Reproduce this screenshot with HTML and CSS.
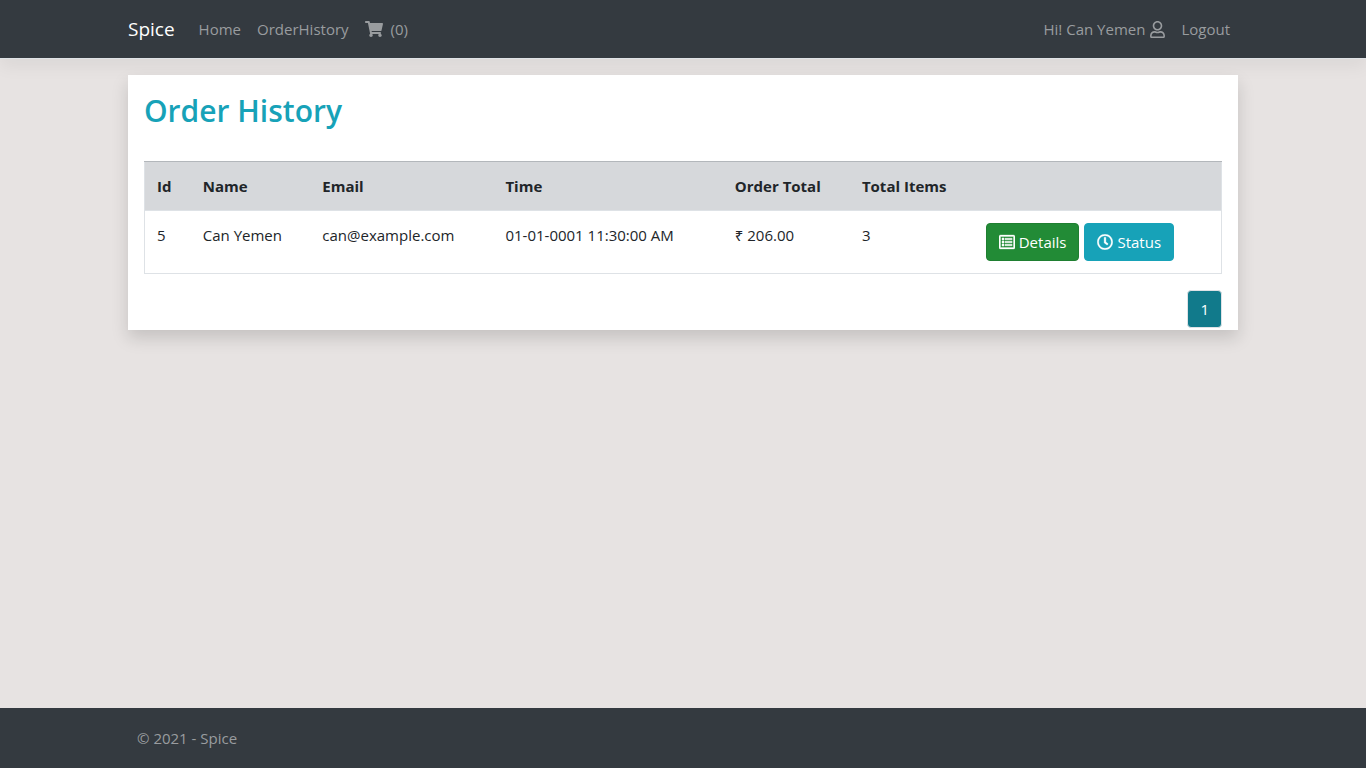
FILE: index.html
```html
<!DOCTYPE html>
<html lang="en">
<head>
<meta charset="utf-8">
<meta name="viewport" content="width=device-width, initial-scale=1">
<title>Order History - Spice</title>
<link rel="stylesheet" href="styles.css">
</head>
<body>
<header class="navbar">
  <nav class="container navbar-inner">
    <a class="brand" href="#">Spice</a>
    <a class="nav-link" href="#">Home</a>
    <a class="nav-link" href="#">OrderHistory</a>
    <a class="nav-link cart-link" href="#"><svg class="icon icon-cart" viewBox="0 0 576 512" aria-hidden="true"><path d="M528.12 301.319l47.273-208C578.806 78.301 567.391 64 551.99 64H159.208l-9.166-44.81C147.758 8.021 137.93 0 126.529 0H24C10.745 0 0 10.745 0 24v16c0 13.255 10.745 24 24 24h69.883l70.248 343.435C147.325 417.1 136 435.222 136 456c0 30.928 25.072 56 56 56s56-25.072 56-56c0-15.674-6.447-29.835-16.824-40h209.647C430.447 426.165 424 440.326 424 456c0 30.928 25.072 56 56 56s56-25.072 56-56c0-22.172-12.888-41.332-31.579-50.405l5.517-24.276c3.413-15.018-8.002-29.319-23.403-29.319H218.117l-6.545-32h293.145c11.206 0 20.92-7.754 23.403-18.681z"/></svg>(0)</a>
    <a class="nav-link user-link" href="#">Hi! Can Yemen<svg class="icon icon-user" viewBox="0 0 448 512" aria-hidden="true"><path d="M313.6 304c-28.7 0-42.5 16-89.6 16-47.1 0-60.8-16-89.6-16C60.2 304 0 364.2 0 438.4V464c0 26.5 21.5 48 48 48h352c26.5 0 48-21.5 48-48v-25.6c0-74.2-60.2-134.4-134.4-134.4zM400 464H48v-25.6c0-47.6 38.8-86.4 86.4-86.4 14.6 0 38.3 16 89.6 16 51.7 0 74.9-16 89.6-16 47.6 0 86.4 38.8 86.4 86.4V464zM224 288c79.5 0 144-64.5 144-144S303.5 0 224 0 80 64.5 80 144s64.5 144 144 144zm0-240c52.9 0 96 43.1 96 96s-43.1 96-96 96-96-43.1-96-96 43.1-96 96-96z"/></svg></a>
    <button class="nav-link logout" type="button">Logout</button>
  </nav>
</header>
<main class="container page">
  <section class="card">
    <h1 class="title">Order History</h1>
    <table class="orders">
      <thead>
        <tr>
          <th class="col-id">Id</th>
          <th class="col-name">Name</th>
          <th class="col-email">Email</th>
          <th class="col-time">Time</th>
          <th class="col-total">Order Total</th>
          <th class="col-items">Total Items</th>
          <th></th>
        </tr>
      </thead>
      <tbody>
        <tr>
          <td>5</td>
          <td>Can Yemen</td>
          <td>can@example.com</td>
          <td>01-01-0001 11:30:00 AM</td>
          <td>₹ 206.00</td>
          <td>3</td>
          <td>
            <div class="actions">
              <button class="btn btn-details" type="button"><svg class="icon icon-btn" viewBox="0 0 512 512" aria-hidden="true"><path fill-rule="evenodd" d="M48 32h416a48 48 0 0 1 48 48v352a48 48 0 0 1-48 48H48a48 48 0 0 1-48-48V80a48 48 0 0 1 48-48zm0 48v352h416V80z"/><circle cx="128" cy="160" r="38"/><circle cx="128" cy="256" r="38"/><circle cx="128" cy="352" r="38"/><path d="M192 134h228v52H192zM192 230h228v52H192zM192 326h228v52H192z"/></svg>Details</button>
              <button class="btn btn-status" type="button"><svg class="icon icon-btn" viewBox="0 0 512 512" aria-hidden="true"><path d="M256 8C119 8 8 119 8 256s111 248 248 248 248-111 248-248S393 8 256 8zm0 448c-110.5 0-200-89.5-200-200S145.5 56 256 56s200 89.5 200 200-89.5 200-200 200zm61.8-104.4l-84.9-61.7c-3.1-2.3-4.9-5.9-4.9-9.7V116c0-6.6 5.4-12 12-12h32c6.6 0 12 5.4 12 12v141.7l66.8 48.6c5.4 3.9 6.5 11.4 2.6 16.8L334.6 349c-3.9 5.3-11.4 6.5-16.8 2.6z"/></svg>Status</button>
            </div>
          </td>
        </tr>
      </tbody>
    </table>
    <nav class="pager" aria-label="Pages"><a class="page-link" href="#">1</a></nav>
  </section>
</main>
<footer class="footer">
  <div class="container footer-inner">© 2021 - Spice</div>
</footer>
</body>
</html>
```

FILE: styles.css
```css
*, *::before, *::after { box-sizing: border-box; }

body {
  margin: 0;
  min-height: 100vh;
  display: flex;
  flex-direction: column;
  background: #e7e3e2;
  color: #212529;
  font-family: "Segoe UI", "Open Sans", "Noto Sans", sans-serif;
  font-size: 15px;
  line-height: 24px;
}

.container {
  width: 100%;
  max-width: 1110px;
  margin: 0 auto;
}

.icon { fill: currentColor; flex: none; }
.icon-btn { stroke: currentColor; stroke-width: 10px; }

.navbar {
  background: #343a40;
  border-bottom: 1px solid #dee2e6;
  box-shadow: 0 8px 16px rgba(0, 0, 0, 0.05);
}

.navbar-inner {
  display: flex;
  align-items: center;
  min-height: 58px;
}

.brand {
  margin-right: 16px;
  color: #fff;
  font-size: 19px;
  line-height: 30px;
  text-decoration: none;
}

.nav-link {
  display: flex;
  align-items: center;
  padding: 8px;
  border: 0;
  background: none;
  color: #999c9f;
  font: inherit;
  text-decoration: none;
}

.icon-cart { width: 18px; height: 16px; margin-right: 8px; }
.user-link { margin-left: auto; }
.icon-user { width: 15px; height: 17px; margin-left: 5px; }

.page { flex: 1; padding-top: 16px; }

.card {
  padding: 16px 16px 2px;
  background: #fff;
  box-shadow: 0 8px 16px rgba(0, 0, 0, 0.15);
}

.title {
  margin: 0 0 30px;
  color: #17a2b8;
  font-size: 30px;
  font-weight: 600;
  line-height: 40px;
}

.orders {
  width: 100%;
  border: 1px solid #dee2e6;
  border-collapse: collapse;
  table-layout: fixed;
}

.orders th, .orders td {
  padding: 12px;
  text-align: left;
  vertical-align: top;
}

.orders th {
  background: #d6d8db;
  border-top: 1px solid #b3b7bb;
  font-size: 15px;
  font-weight: 700;
}

.orders td { border-top: 1px solid #dee2e6; }

.col-id { width: 4.3%; }
.col-name { width: 11.1%; }
.col-email { width: 17%; }
.col-time { width: 21.3%; }
.col-total { width: 11.8%; }
.col-items { width: 11.5%; }

.actions { display: flex; gap: 5px; }

.btn {
  display: flex;
  align-items: center;
  gap: 4px;
  padding: 6px 12px;
  border: 1px solid;
  border-radius: 4px;
  color: #fff;
  font: inherit;
}

.btn-details { background: #228b36; border-color: #1f7f31; }
.btn-status { background: #17a2b8; border-color: #17a2b8; }
.icon-btn { width: 16px; height: 16px; }

.pager {
  display: flex;
  justify-content: flex-end;
  margin-top: 16px;
}

.page-link {
  padding: 6px 12px;
  border: 1px solid #dee2e6;
  border-radius: 4px;
  background: #117a8b;
  color: #fff;
  text-decoration: none;
}

.footer { background: #343a40; color: #999c9f; }
.footer-inner { padding: 18px 9px; }
```
